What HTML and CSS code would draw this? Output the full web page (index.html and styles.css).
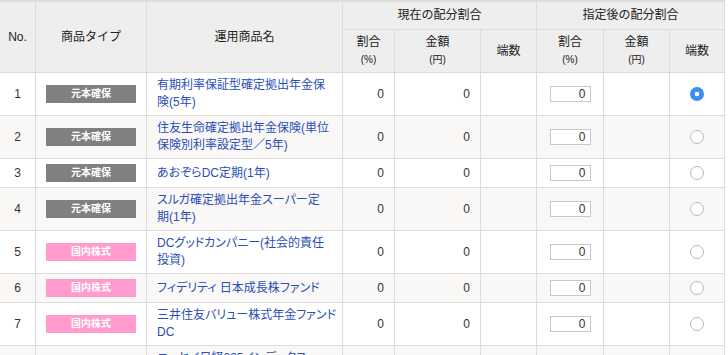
FILE: index.html
```html
<!DOCTYPE html>
<html lang="ja">
<head>
<meta charset="utf-8">
<title>配分割合</title>
<link rel="stylesheet" href="styles.css">
</head>
<body>
<table class="alloc">
  <colgroup>
    <col class="c-no"><col class="c-type"><col class="c-name">
    <col class="c-rate"><col class="c-amt"><col class="c-frac">
    <col class="c-rate2"><col class="c-amt2"><col class="c-frac2">
  </colgroup>
  <thead>
    <tr class="grp">
      <th rowspan="2">No.</th>
      <th rowspan="2">商品タイプ</th>
      <th rowspan="2">運用商品名</th>
      <th colspan="3">現在の配分割合</th>
      <th colspan="3">指定後の配分割合</th>
    </tr>
    <tr class="sub">
      <th>割合<span class="unit">(%)</span></th>
      <th>金額<span class="unit">(円)</span></th>
      <th>端数</th>
      <th>割合<span class="unit">(%)</span></th>
      <th>金額<span class="unit">(円)</span></th>
      <th>端数</th>
    </tr>
  </thead>
  <tbody>
    <tr>
      <td class="no">1</td>
      <td><span class="badge gray">元本確保</span></td>
      <td class="name"><a href="#">有期利率保証型確定拠出年金保<br>険(5年)</a></td>
      <td class="num">0</td><td class="num">0</td><td></td>
      <td><input class="pct" type="text" value="0"></td><td></td>
      <td><input class="radio" type="radio" name="frac" checked></td>
    </tr>
    <tr>
      <td class="no">2</td>
      <td><span class="badge gray">元本確保</span></td>
      <td class="name"><a href="#">住友生命確定拠出年金保険(単位<br>保険別利率設定型／5年)</a></td>
      <td class="num">0</td><td class="num">0</td><td></td>
      <td><input class="pct" type="text" value="0"></td><td></td>
      <td><input class="radio" type="radio" name="frac"></td>
    </tr>
    <tr>
      <td class="no">3</td>
      <td><span class="badge gray">元本確保</span></td>
      <td class="name"><a href="#">あおぞらDC定期(1年)</a></td>
      <td class="num">0</td><td class="num">0</td><td></td>
      <td><input class="pct" type="text" value="0"></td><td></td>
      <td><input class="radio" type="radio" name="frac"></td>
    </tr>
    <tr>
      <td class="no">4</td>
      <td><span class="badge gray">元本確保</span></td>
      <td class="name"><a href="#">スルガ確定拠出年金スーパー定<br>期(1年)</a></td>
      <td class="num">0</td><td class="num">0</td><td></td>
      <td><input class="pct" type="text" value="0"></td><td></td>
      <td><input class="radio" type="radio" name="frac"></td>
    </tr>
    <tr>
      <td class="no">5</td>
      <td><span class="badge pink">国内株式</span></td>
      <td class="name"><a href="#">DCグッドカンパニー(社会的責任<br>投資)</a></td>
      <td class="num">0</td><td class="num">0</td><td></td>
      <td><input class="pct" type="text" value="0"></td><td></td>
      <td><input class="radio" type="radio" name="frac"></td>
    </tr>
    <tr>
      <td class="no">6</td>
      <td><span class="badge pink">国内株式</span></td>
      <td class="name"><a href="#">フィデリティ 日本成長株ファンド</a></td>
      <td class="num">0</td><td class="num">0</td><td></td>
      <td><input class="pct" type="text" value="0"></td><td></td>
      <td><input class="radio" type="radio" name="frac"></td>
    </tr>
    <tr>
      <td class="no">7</td>
      <td><span class="badge pink">国内株式</span></td>
      <td class="name"><a href="#">三井住友バリュー株式年金ファンド<br>DC</a></td>
      <td class="num">0</td><td class="num">0</td><td></td>
      <td><input class="pct" type="text" value="0"></td><td></td>
      <td><input class="radio" type="radio" name="frac"></td>
    </tr>
    <tr>
      <td class="no">8</td>
      <td><span class="badge pink">国内株式</span></td>
      <td class="name"><a href="#">ニッセイ日経225インデックス<br>ファンド</a></td>
      <td class="num">0</td><td class="num">0</td><td></td>
      <td><input class="pct" type="text" value="0"></td><td></td>
      <td><input class="radio" type="radio" name="frac"></td>
    </tr>
  </tbody>
</table>
</body>
</html>
```
FILE: styles.css
```css
html, body {
  margin: 0;
  padding: 0;
  background: #fff;
}
body {
  font-family: "Liberation Sans", "Noto Sans CJK JP", sans-serif;
  font-size: 12px;
  color: #333;
}
.alloc {
  border-collapse: separate;
  border-spacing: 0;
  table-layout: fixed;
  width: 725px;
  border-top: 2px solid #dcdcdc;
}
.c-no { width: 36px; }
.c-type { width: 111px; }
.c-name { width: 196px; }
.c-rate { width: 52px; }
.c-amt { width: 86px; }
.c-frac { width: 56px; }
.c-rate2 { width: 67px; }
.c-amt2 { width: 66px; }
.c-frac2 { width: 55px; }

.alloc th,
.alloc td {
  border-right: 1px solid #dcdcdc;
  border-bottom: 1px solid #dcdcdc;
  padding: 4px;
  line-height: 17px;
  vertical-align: middle;
  text-align: center;
}
.alloc th {
  background: #eeeeee;
  font-weight: normal;
  color: #222;
}
.grp th {
  padding-top: 5px;
  padding-bottom: 5px;
}
.unit {
  display: block;
  font-size: 10px;
}
.alloc td {
  height: 20px;
  background: #fff;
}
.alloc tbody tr:nth-child(even) td {
  background: #f9f8f6;
}
.alloc td.name {
  text-align: left;
  padding-left: 10px;
  padding-right: 4px;
  white-space: nowrap;
  font-feature-settings: "palt";
}
.name a {
  color: #2a4db8;
  text-decoration: none;
}
.alloc td.num {
  text-align: right;
  padding-right: 10px;
}
.badge {
  display: block;
  width: 90px;
  height: 18px;
  margin: 0 auto;
  line-height: 18px;
  font-size: 10px;
  font-weight: bold;
  color: #fff;
  text-align: center;
}
.badge.gray { background: #808080; }
.badge.pink { background: #ff9bcd; }
.pct {
  display: block;
  box-sizing: border-box;
  width: 41px;
  height: 16px;
  margin: 0 auto;
  padding: 0 4px;
  border: 1px solid #c8c8c8;
  background: #fff;
  font-family: "Liberation Sans", sans-serif;
  font-size: 12px;
  color: #333;
  text-align: right;
}
.radio {
  -webkit-appearance: none;
  appearance: none;
  display: block;
  box-sizing: border-box;
  width: 14px;
  height: 14px;
  margin: 0 auto;
  border: 1px solid #b9b9b9;
  border-radius: 50%;
  background: #fff;
}
.radio:checked {
  border: none;
  background: radial-gradient(circle, #fff 0 2px, #3c8ef3 2.6px);
}
```
